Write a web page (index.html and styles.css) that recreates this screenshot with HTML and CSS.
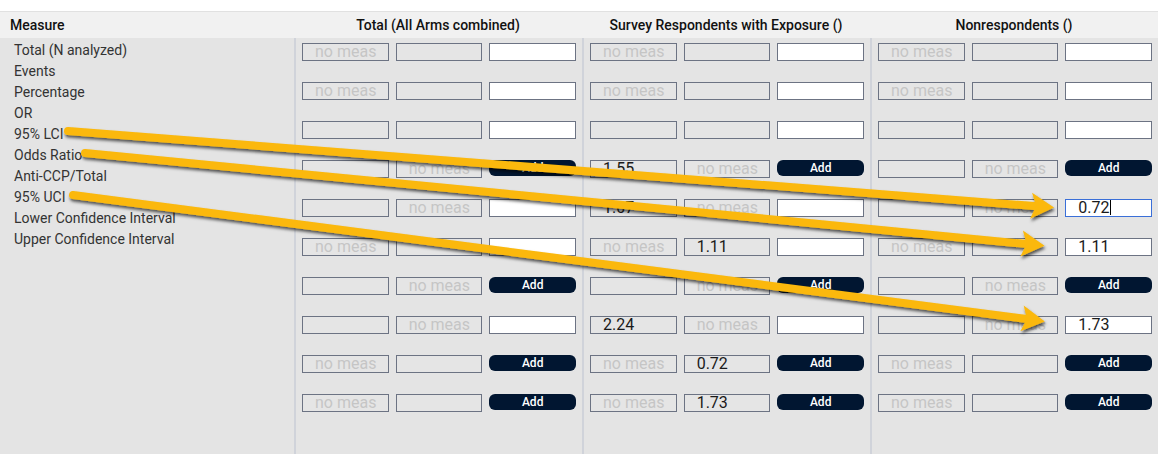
FILE: index.html
```html
<!DOCTYPE html>
<html lang="en">

<head>
    <meta charset="UTF-8">
    <meta name="viewport" content="width=device-width, initial-scale=1.0">
    <title>Outcome Measures</title>
    <link rel="stylesheet" href="styles.css">
</head>

<body>

    <div class="page">
        <div class="results">
            <!-- Header row -->
            <div class="head">
                <div class="head-measure">Measure</div>
                <div class="head-arm">Total (All Arms combined)</div>
                <div class="head-arm">Survey Respondents with Exposure ()</div>
                <div class="head-arm">Nonrespondents ()</div>
            </div>

            <!-- Body -->
            <div class="grid">
                <div class="measures">
                    <div>Total (N analyzed)</div>
                    <div>Events</div>
                    <div>Percentage</div>
                    <div>OR</div>
                    <div>95% LCI</div>
                    <div>Odds Ratio</div>
                    <div>Anti-CCP/Total</div>
                    <div>95% UCI</div>
                    <div>Lower Confidence Interval</div>
                    <div>Upper Confidence Interval</div>
                </div>
                <div class="arm" id="arm0"></div>
                <div class="arm" id="arm1"></div>
                <div class="arm" id="arm2"></div>
            </div>
        </div>
    </div>

    <!-- Annotation arrows -->
    <svg class="arrows" width="1167" height="454" viewBox="0 0 1167 454">
        <defs>
            <filter id="shadow" x="-10%" y="-50%" width="120%" height="200%">
                <feDropShadow dx="1" dy="2.5" stdDeviation="1.6" flood-color="#000" flood-opacity="0.65" />
            </filter>
        </defs>
        <g filter="url(#shadow)" fill="#fbb80a" stroke="#fbb80a">
            <g transform="translate(68 131) rotate(4.44)">
                <line x1="0" y1="0" x2="972" y2="0" stroke-width="8" stroke-linecap="round" />
                <polygon points="989,0 966,-13 971,0 966,13" stroke="none" />
            </g>
            <g transform="translate(85 153) rotate(5.52)">
                <line x1="0" y1="0" x2="947" y2="0" stroke-width="8" stroke-linecap="round" />
                <polygon points="964,0 941,-13 946,0 941,13" stroke="none" />
            </g>
            <g transform="translate(73 195) rotate(7.41)">
                <line x1="0" y1="0" x2="962" y2="0" stroke-width="8" stroke-linecap="round" />
                <polygon points="980,0 957,-13 962,0 957,13" stroke="none" />
            </g>
        </g>
    </svg>

    <script>
        // n = no meas (disabled), e = empty (disabled), w = white input, a = Add button
        // plain number = disabled value, "=" prefix = white input with value, "*" prefix = focused input
        const arms = [
            [
                ["n", "e", "w"], ["n", "e", "w"], ["e", "e", "w"], ["e", "n", "a"], ["e", "n", "w"],
                ["n", "e", "w"], ["e", "n", "a"], ["e", "n", "w"], ["n", "e", "a"], ["n", "e", "a"]
            ],
            [
                ["n", "e", "w"], ["n", "e", "w"], ["e", "e", "w"], ["1.55", "n", "a"], ["1.07", "n", "w"],
                ["n", "1.11", "w"], ["e", "n", "a"], ["2.24", "n", "w"], ["n", "0.72", "a"], ["n", "1.73", "a"]
            ],
            [
                ["n", "e", "w"], ["n", "e", "w"], ["e", "e", "w"], ["e", "n", "a"], ["e", "n", "*0.72"],
                ["n", "e", "=1.11"], ["e", "n", "a"], ["e", "n", "=1.73"], ["n", "e", "a"], ["n", "e", "a"]
            ]
        ];

        function renderCell(code) {
            if (code === "n") return `<span class="cell off hint">no meas</span>`;
            if (code === "e") return `<span class="cell off"></span>`;
            if (code === "w") return `<span class="cell"></span>`;
            if (code === "a") return `<button class="add">Add</button>`;
            if (code[0] === "=") return `<span class="cell">${code.slice(1)}</span>`;
            if (code[0] === "*") return `<span class="cell focus">${code.slice(1)}<i class="caret"></i></span>`;
            return `<span class="cell off">${code}</span>`;
        }

        arms.forEach((rows, i) => {
            const arm = document.getElementById("arm" + i);
            arm.innerHTML = rows.map(row =>
                `<div class="row">${row.map(renderCell).join("")}</div>`
            ).join("");
        });
    </script>

</body>

</html>
```

FILE: styles.css
```css
html,
body {
    margin: 0;
    padding: 0;
    height: 100%;
    background-color: #fff;
    font-family: Roboto, "Liberation Sans", sans-serif;
}

.page {
    height: 100%;
    padding-top: 11px;
    box-sizing: border-box;
    display: flex;
    flex-direction: column;
}

.results {
    width: 1158px;
    flex: 1;
    display: flex;
    flex-direction: column;
}

.head {
    display: flex;
    height: 26px;
    align-items: center;
    background-color: #f1f1f1;
    border-top: 1px solid #e1e1e1;
    font-size: 14px;
    font-weight: 500;
    color: #111;
}

.head-measure {
    width: 294px;
    padding-left: 10px;
    box-sizing: border-box;
}

.head-arm {
    width: 288px;
    text-align: center;
}

.grid {
    flex: 1;
    display: flex;
    background-color: #e4e4e4;
}

.measures {
    width: 294px;
    padding: 2px 0 0 14px;
    box-sizing: border-box;
    font-size: 14px;
    line-height: 21px;
    color: #333;
}

.arm {
    width: 288px;
    box-sizing: border-box;
    border-left: 2px solid #d0d3da;
    padding: 5px 6px 0;
    display: flex;
    flex-direction: column;
    gap: 21px;
}

.row {
    display: grid;
    grid-template-columns: repeat(3, 1fr);
    column-gap: 7px;
    height: 18px;
}

.cell {
    display: block;
    height: 18px;
    box-sizing: border-box;
    border: 1px solid #6c7383;
    background-color: #fff;
    padding: 0 12px;
    font-size: 16px;
    line-height: 16px;
    color: #1a1a1a;
    white-space: nowrap;
    overflow: hidden;
}

.cell.off {
    background-color: #e5e5e5;
}

.cell.hint {
    color: #c5c5c5;
}

.cell.focus {
    border-color: #3a6fd8;
}

.caret {
    display: inline-block;
    width: 1px;
    height: 15px;
    background-color: #000;
    vertical-align: top;
}

.add {
    height: 16px;
    margin: 0;
    padding: 0;
    border: none;
    border-radius: 6px;
    background-color: #011631;
    color: #fff;
    font-family: Roboto, "Liberation Sans", sans-serif;
    font-size: 12px;
    font-weight: 500;
    line-height: 16px;
}

.arrows {
    position: absolute;
    top: 0;
    left: 0;
    pointer-events: none;
}
```
